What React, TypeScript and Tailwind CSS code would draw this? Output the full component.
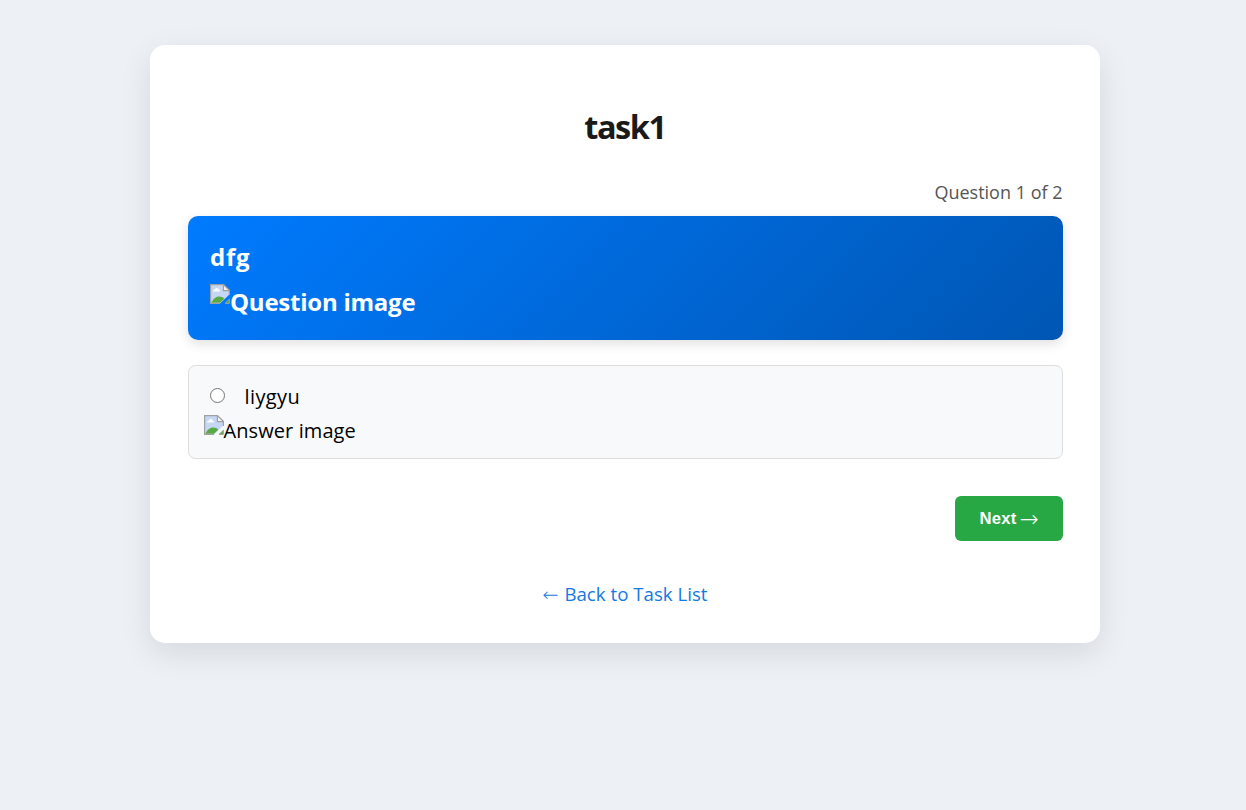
function BrokenImage({ className = '' }: { className?: string }) {
  return (
    <svg className={className} width="20" height="20" viewBox="0 0 20 20" aria-hidden="true">
      <path d="M0.6 0.6H14L19.4 6V10.5L10 19.4H0.6Z" fill="#c6d7f6" />
      <path d="M3.2 7.2C3.2 5.8 4.4 5.4 5 5.6C5.4 3.6 8 3.6 8.4 5.4C9.8 5.2 10.4 7.2 9.4 7.6H3.4Z" fill="#fff" />
      <path d="M1.3 18.7C3 14.8 6 12.4 9 12.4C11.4 12.4 13.2 13.2 14.2 14.8L10 18.7Z" fill="#59aa42" />
      <path d="M13.4 1V6.6H19" fill="#f4f4f4" stroke="#a0a0a0" strokeWidth="1.2" />
      <path d="M10 19.4H0.6V0.6H13.4L19.4 6.4V11" fill="none" stroke="#a0a0a0" strokeWidth="1.25" />
      <path d="M15 19.4L19.4 15.2V19.4Z" fill="#59aa42" stroke="#a0a0a0" strokeWidth="1" />
    </svg>
  );
}

export default function App() {
  return (
    <main className="min-h-screen bg-[#edf1f6] pt-[45px] pl-[150px] font-['Open_Sans',sans-serif] text-black">
      <section className="flex h-[598px] w-[950px] flex-col rounded-[15px] bg-white px-[37.5px] pt-[60px] shadow-[0_10px_31px_rgba(0,0,0,0.1)]">
        <h1 className="text-center text-[32.5px] leading-[44px] font-bold tracking-[-1.4px] text-[#1a1a1a]">task1</h1>
        <p className="mt-[30px] text-right text-[18px] leading-[26px] text-[#555]">Question 1 of 2</p>
        <div className="mt-[11px] flex h-[124px] flex-col rounded-[10px] bg-[linear-gradient(135deg,#007bff,#0056b3)] px-[22.5px] pt-[24px] text-[24px] leading-[34px] font-bold text-white shadow-[0_4px_12px_rgba(0,0,0,0.12)]">
          <p className="tracking-[0.8px]">dfg</p>
          <div className="mt-[11px] flex">
            <BrokenImage className="-mt-px shrink-0" />
            <span className="tracking-[-0.24px]">Question image</span>
          </div>
        </div>
        <label className="mt-[25px] flex h-[94px] flex-col rounded-[7.5px] border border-[#ddd] bg-[#f8f9fb] px-[15px] pt-[17px] text-[20px] leading-[27px]">
          <span className="flex items-center">
            <input type="radio" name="answer" className="relative -top-px mr-[20px] ml-[6px] size-[15px] appearance-none rounded-full border border-[#767676] bg-white checked:border-[5px] checked:border-[#0075ff]" />
            <span className="tracking-[0.4px]">liygyu</span>
          </span>
          <span className="mt-[7px] flex">
            <BrokenImage className="-mt-[2px] shrink-0" />
            <span className="tracking-[0.09px]">Answer image</span>
          </span>
        </label>
        <button className="mt-[37px] flex h-[45px] w-[108px] items-center justify-start gap-[3px] self-end rounded-[6px] bg-[#28a745] pl-[25px] font-['Liberation_Sans',Arial,sans-serif] text-[16.67px] font-bold text-white">
          <span className="tracking-[0.2px]">Next</span>
          <span className="pt-px font-['DejaVu_Sans_Light','DejaVu_Sans',sans-serif] text-[23px] leading-none font-extralight">→</span>
        </button>
        <a href="#" className="mt-[39px] flex items-center gap-[6px] self-center text-[18.7px] leading-[25px] text-[#1579e0]">
          <span className="pt-[3px] font-['DejaVu_Sans_Light','DejaVu_Sans',sans-serif] text-[19px] leading-[23px] font-extralight">←</span>
          <span>Back to Task List</span>
        </a>
      </section>
    </main>
  );
}
